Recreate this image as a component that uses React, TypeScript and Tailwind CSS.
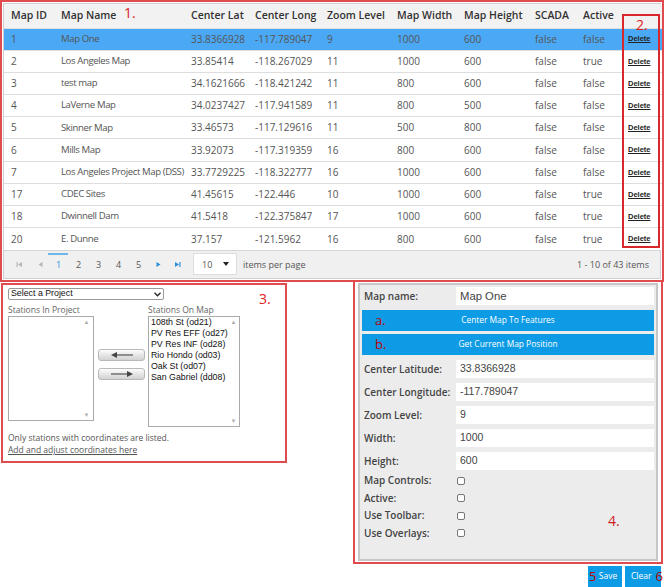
import React from "react";

const rows = [
  ["1", "Map One", "33.8366928", "-117.789047", "9", "1000", "600", "false", "false"],
  ["2", "Los Angeles Map", "33.85414", "-118.267029", "11", "1000", "600", "false", "true"],
  ["3", "test map", "34.1621666", "-118.421242", "11", "800", "600", "false", "false"],
  ["4", "LaVerne Map", "34.0237427", "-117.941589", "11", "800", "500", "false", "false"],
  ["5", "Skinner Map", "33.46573", "-117.129616", "11", "500", "800", "false", "false"],
  ["6", "Mills Map", "33.92073", "-117.319359", "16", "800", "600", "false", "false"],
  ["7", "Los Angeles Project Map (DSS)", "33.7729225", "-118.322777", "16", "1000", "600", "false", "false"],
  ["17", "CDEC Sites", "41.45615", "-122.446", "10", "1000", "600", "false", "true"],
  ["18", "Dwinnell Dam", "41.5418", "-122.375847", "17", "1000", "600", "false", "true"],
  ["20", "E. Dunne", "37.157", "-121.5962", "16", "800", "600", "false", "true"],
];

const headers = ["Map ID", "Map Name", "Center Lat", "Center Long", "Zoom Level", "Map Width", "Map Height", "SCADA", "Active", ""];
const widths = [50, 130, 64, 72, 70, 67, 71, 48, 45, 41];

const stations = ["108th St (od21)", "PV Res EFF (od27)", "PV Res INF (od28)", "Rio Hondo (od03)", "Oak St (od07)", "San Gabriel (dd08)"];

function ScrollBar() {
  return (
    <div className="w-[13px] h-full flex flex-col justify-between items-center py-[2px] text-[6px] leading-none text-[#b0b0b0]">
      <span>▲</span>
      <span>▼</span>
    </div>
  );
}

function ArrowBtn({ dir }: { dir: "l" | "r" }) {
  return (
    <div className="w-[47px] h-[12px] rounded-[3px] border border-[#b9b9b9] bg-gradient-to-b from-[#fdfdfd] via-[#e6e6e6] to-[#d2d2d2] flex items-center justify-center">
      <svg width="22" height="6" viewBox="0 0 22 6">
        {dir === "l" ? (
          <>
            <polygon points="0,3 6,0 6,6" fill="#444" />
            <rect x="6" y="2.4" width="16" height="1.2" fill="#555" />
          </>
        ) : (
          <>
            <rect x="0" y="2.4" width="16" height="1.2" fill="#555" />
            <polygon points="22,3 16,0 16,6" fill="#444" />
          </>
        )}
      </svg>
    </div>
  );
}

function Field({ label, value, big }: { label: string; value: string; big?: boolean }) {
  return (
    <div className="flex items-center h-[18px]">
      <div className="w-[92px] text-[10px] font-semibold text-[#444] whitespace-nowrap">{label}</div>
      <div
        className={`flex-1 h-[18px] bg-white flex items-center px-[4px] text-[#444] [font-family:'Liberation_Sans',Arial,sans-serif] ${
          big ? "text-[11.3px]" : "text-[10.5px]"
        }`}
      >
        {value}
      </div>
    </div>
  );
}

function Check({ label }: { label: string }) {
  return (
    <div className="flex items-center h-[17.5px]">
      <div className="w-[93px] text-[10px] font-semibold text-[#444] whitespace-nowrap">{label}</div>
      <div className="w-[8px] h-[8px] border border-[#777] rounded-[2px] bg-white" />
    </div>
  );
}

function PagerIcon({ kind, color }: { kind: "first" | "prev" | "next" | "last"; color: string }) {
  return (
    <svg width="7" height="7" viewBox="0 0 7 7">
      {kind === "first" && (
        <>
          <rect x="0.5" y="1" width="1.2" height="5" fill={color} />
          <polygon points="2,3.5 6,1 6,6" fill={color} />
        </>
      )}
      {kind === "prev" && <polygon points="1.5,3.5 5.5,1 5.5,6" fill={color} />}
      {kind === "next" && <polygon points="5.5,3.5 1.5,1 1.5,6" fill={color} />}
      {kind === "last" && (
        <>
          <polygon points="5,3.5 1,1 1,6" fill={color} />
          <rect x="5.3" y="1" width="1.2" height="5" fill={color} />
        </>
      )}
    </svg>
  );
}

export default function App() {
  return (
    <div className="w-[667px] h-[587px] bg-white relative overflow-hidden [font-family:'Open_Sans',sans-serif]">
      {/* Section 1: grid */}
      <div className="relative w-[664px] h-[282px] border-2 border-[#e04b4f] p-[1px]">
        <div className="w-full h-full border border-[#cfcfcf] flex flex-col">
          <table className="table-fixed border-collapse w-full">
            <colgroup>
              {widths.map((w, i) => (
                <col key={i} style={{ width: w }} />
              ))}
            </colgroup>
            <thead>
              <tr className="h-[24px] bg-[#f2f2f2]">
                {headers.map((h, i) => (
                  <th key={i} className="text-left pl-[7px] text-[10.5px] font-semibold text-[#333] whitespace-nowrap">
                    {h}
                  </th>
                ))}
              </tr>
            </thead>
            <tbody>
              {rows.map((r, ri) => (
                <tr
                  key={ri}
                  className={`h-[22.2px] border-t border-[#dedede] ${ri === 0 ? "bg-[#4ba8f4]" : "bg-white"}`}
                >
                  {r.map((c, ci) => (
                    <td
                      key={ci}
                      className={`pl-[7px] text-[#555] whitespace-nowrap ${
                        ci === 1 ? "text-[9.6px] tracking-[-0.4px]" : "text-[10px]"
                      }`}
                    >
                      {c}
                    </td>
                  ))}
                  <td className="pl-[7px] text-[7.5px] font-bold text-[#222] underline [font-family:'Liberation_Sans',Arial,sans-serif]">
                    Delete
                  </td>
                </tr>
              ))}
            </tbody>
          </table>
          <div className="flex-1 bg-[#f0f0f0] border-t border-[#d6d6d6] flex items-stretch pl-[12px] pr-[10px] text-[9px] text-[#555]">
            <span className="w-[21px] flex items-center">
              <PagerIcon kind="first" color="#b5b5b5" />
            </span>
            <span className="w-[19px] flex items-center">
              <PagerIcon kind="prev" color="#b5b5b5" />
            </span>
            <span className="relative w-[20px] flex items-center text-[#2a8fd8]">
              <span className="absolute top-[2px] -left-[8px] w-[20px] h-[2px] bg-[#6fb6ea]" />
              1
            </span>
            <span className="w-[20px] flex items-center">2</span>
            <span className="w-[20px] flex items-center">3</span>
            <span className="w-[20px] flex items-center">4</span>
            <span className="w-[19px] flex items-center">5</span>
            <span className="w-[19px] flex items-center">
              <PagerIcon kind="next" color="#2a8fd8" />
            </span>
            <span className="w-[17px] flex items-center">
              <PagerIcon kind="last" color="#2a8fd8" />
            </span>
            <div className="self-center w-[44px] h-[22px] bg-white border border-[#ddd] flex items-center justify-between pl-[8px] pr-[7px] ml-[2px]">
              <span>10</span>
              <svg width="6" height="4" viewBox="0 0 6 4"><polygon points="0,0 6,0 3,4" fill="#222" /></svg>
            </div>
            <span className="ml-[6px] self-center">items per page</span>
            <span className="ml-auto self-center pr-[1px]">1 - 10 of 43 items</span>
          </div>
        </div>
        {/* annotations */}
        <span className="absolute left-[122px] top-[4px] text-[14px] text-[#d22] leading-none">1.</span>
        <div className="absolute left-[620px] top-[12px] w-[38px] h-[234px] border-2 border-[#d8282c]" />
        <span className="absolute left-[634px] top-[16px] text-[14px] text-[#d22] leading-none">2.</span>
      </div>

      <div className="flex">
        {/* Section 3 */}
        <div className="relative w-[286px] h-[180px] border-2 border-[#e04b4f] ml-[1px] mt-[1px] pl-[5px] pt-[3px] [font-family:'Liberation_Sans',Arial,sans-serif]">
          <div className="w-[156px] h-[12px] border border-[#999] rounded-[2px] bg-white flex items-center justify-between px-[2px] text-[8.8px] text-[#111]">
            <span>Select a Project</span>
            <svg width="7" height="5" viewBox="0 0 7 5"><path d="M0.5 0.8 L3.5 3.8 L6.5 0.8" stroke="#222" strokeWidth="1.3" fill="none" /></svg>
          </div>
          <div className="flex mt-[4px]">
            <div className="w-[86px]">
              <div className="text-[8.5px] text-[#666] leading-[12px] whitespace-nowrap [font-family:'Open_Sans',sans-serif]">Stations In Project</div>
              <div className="h-[105px] border border-[#aaa] bg-white flex justify-end">
                <ScrollBar />
              </div>
            </div>
            <div className="flex flex-col gap-[7px] ml-[4px] mr-[3px] mt-[45px]">
              <ArrowBtn dir="l" />
              <ArrowBtn dir="r" />
            </div>
            <div className="w-[92px]">
              <div className="text-[8.5px] text-[#666] leading-[12px] whitespace-nowrap [font-family:'Open_Sans',sans-serif]">Stations On Map</div>
              <div className="h-[111px] border border-[#aaa] bg-white flex">
                <div className="flex-1 pl-[2px] text-[8.8px] leading-[11px] text-[#111]">
                  {stations.map((s) => (
                    <div key={s} className="whitespace-nowrap">{s}</div>
                  ))}
                </div>
                <ScrollBar />
              </div>
            </div>
          </div>
          <div className="mt-[5px] text-[8.5px] leading-[12px] text-[#555] whitespace-nowrap [font-family:'Open_Sans',sans-serif]">
            Only stations with coordinates are listed.
          </div>
          <div className="text-[8.5px] leading-[12px] text-[#555] underline whitespace-nowrap [font-family:'Open_Sans',sans-serif]">
            Add and adjust coordinates here
          </div>
          <span className="absolute left-[256px] top-[7px] text-[14px] text-[#d22] leading-none [font-family:'Open_Sans',sans-serif]">3.</span>
        </div>

        {/* Section 4 + buttons */}
        <div className="ml-[66px] -mt-[2px] flex flex-col">
          <div className="relative w-[310px] h-[284px] border-2 border-[#e04b4f] px-[3px] pt-[1px]">
            <div className="h-[278px] bg-[#ececec] border-2 border-[#c7c7c7] px-[2px] pt-[2px] flex flex-col">
              <div className="pl-[2px]">
                <Field label="Map name:" value="Map One" big />
              </div>
              <div className="relative mt-[5px] h-[21px] bg-[#0d9be6] flex items-center justify-center text-white text-[8.4px]">
                <span className="absolute left-[13px] top-[1px] text-[13px] text-[#b00]">a.</span>
                Center Map To Features
              </div>
              <div className="relative mt-[3px] h-[21px] bg-[#0d9be6] flex items-center justify-center text-white text-[8.4px]">
                <span className="absolute left-[13px] top-[1px] text-[13px] text-[#b00]">b.</span>
                Get Current Map Position
              </div>
              <div className="pl-[2px] flex flex-col gap-[5px] mt-[5px]">
                <Field label="Center Latitude:" value="33.8366928" />
                <Field label="Center Longitude:" value="-117.789047" />
                <Field label="Zoom Level:" value="9" />
                <Field label="Width:" value="1000" />
                <Field label="Height:" value="600" />
              </div>
              <div className="pl-[2px] mt-[2px] flex flex-col">
                <Check label="Map Controls:" />
                <Check label="Active:" />
                <Check label="Use Toolbar:" />
                <Check label="Use Overlays:" />
              </div>
            </div>
            <span className="absolute left-[253px] top-[232px] text-[14px] text-[#c22] leading-none">4.</span>
          </div>
          <div className="flex justify-end gap-[3px] mt-[2px] pr-[2px]">
            <div className="relative w-[34px] h-[21px] bg-[#0d9be6] flex items-center justify-center text-white text-[8.5px] pl-[6px]">
              <span className="absolute left-[1px] top-[1px] text-[13px] text-[#b00] leading-[18px]">5</span>
              Save
            </div>
            <div className="relative w-[36px] h-[21px] bg-[#0d9be6] flex items-center justify-start pl-[6px] text-white text-[8.5px]">
              Clear
              <span className="absolute right-[-2px] top-[1px] text-[13px] text-[#b00] leading-[18px]">6</span>
            </div>
          </div>
        </div>
      </div>
    </div>
  );
}
